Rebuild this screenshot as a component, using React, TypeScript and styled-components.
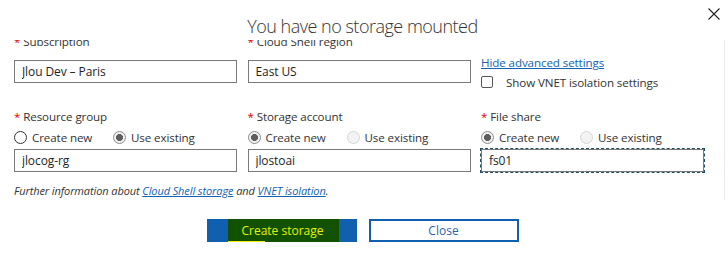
import styled, { createGlobalStyle } from 'styled-components'

/* --------------------- Style --------------------- */
const GlobalStyle = createGlobalStyle`
  html, body {
    margin: 0;
    padding: 0;
    background: #fff;
  }
  body {
    font-family: 'Open Sans', 'Liberation Sans', sans-serif;
    color: #333;
  }
`

const Dialog = styled.div`
  width: 725px;
  height: 255px;
  display: flex;
  flex-direction: column;
  overflow: hidden;
  background: #fff;
`

const Header = styled.header`
  height: 40px;
  flex: none;
  display: grid;
  grid-template-columns: 1fr auto 1fr;
  align-items: start;
`

const Title = styled.h1`
  grid-column: 2;
  margin: 0;
  padding-top: 15px;
  font-size: 18px;
  line-height: 23px;
  letter-spacing: -0.5px;
  font-weight: 300;
  color: #333;
  white-space: nowrap;
`

const CloseIcon = styled.button`
  grid-column: 3;
  justify-self: end;
  margin: 8px 5px 0 0;
  padding: 0;
  width: 12px;
  height: 12px;
  border: none;
  background: none;
  display: flex;
  > svg {
    display: block;
  }
`

const Body = styled.div`
  height: 160px;
  flex: none;
  overflow: hidden;
  border-right: 1px solid #ececec;
`

const Scroller = styled.div`
  margin-top: -6px;
  padding: 0 14px;
  font-size: 11.6px;
  letter-spacing: -0.1px;
`

const Grid = styled.div`
  display: grid;
  grid-template-columns: 223px 223px 223px;
  column-gap: 10.5px;
  row-gap: 18px;
  align-items: start;
`

const Field = styled.div<{ $padTop?: number }>`
  display: flex;
  flex-direction: column;
  padding-top: ${(p) => p.$padTop ?? 0}px;
`

const Label = styled.label<{ $gap?: number }>`
  line-height: 16px;
  color: #333;
  margin-bottom: ${(p) => p.$gap ?? 0}px;
  white-space: nowrap;
  > span {
    color: #e00000;
  }
`

const RadioRow = styled.div`
  height: 22px;
  margin: 1px 0 1px;
  display: grid;
  grid-template-columns: 99px auto;
  align-items: center;
`

const RadioOption = styled.label`
  display: flex;
  align-items: center;
  gap: 5px;
  color: #333;
  white-space: nowrap;
`

const RadioDot = styled.span<{ $state: 'off' | 'on' | 'disabled' }>`
  width: 13px;
  height: 13px;
  box-sizing: border-box;
  border-radius: 50%;
  flex: none;
  border: 1px solid
    ${(p) => (p.$state === 'off' ? '#333' : p.$state === 'on' ? '#8a8a8a' : '#d6d6d6')};
  background: ${(p) =>
    p.$state === 'on'
      ? 'radial-gradient(circle, #5e5e5e 0 3.2px, #f2f2f2 3.8px)'
      : p.$state === 'disabled'
      ? '#f3f3f3'
      : '#fff'};
`

const Input = styled.input<{ $focused?: boolean }>`
  height: 23px;
  box-sizing: border-box;
  width: 100%;
  margin: 0;
  padding: 0 7px;
  border: 1px solid #7a7a7a;
  font-family: inherit;
  font-size: 12px;
  letter-spacing: -0.1px;
  color: #1e1e1e;
  background: #fff;
  outline: ${(p) => (p.$focused ? '1px dashed #1d4d5e' : 'none')};
  outline-offset: 0;
`

const Link = styled.a`
  color: #1263b3;
  text-decoration: underline;
  cursor: pointer;
`

const SideLink = styled(Link)`
  line-height: 16px;
`

const CheckRow = styled.label`
  display: flex;
  align-items: center;
  gap: 13px;
  height: 18px;
  margin-top: 2px;
  color: #333;
`

const CheckBox = styled.span`
  width: 12px;
  height: 12px;
  box-sizing: border-box;
  border: 1px solid #555;
  border-radius: 2px;
  flex: none;
`

const Info = styled.p`
  margin: 11px 0 0;
  font-size: 11px;
  line-height: 15px;
  font-style: italic;
  color: #333;
`

const Footer = styled.footer`
  flex: 1;
  display: flex;
  justify-content: center;
  align-items: flex-start;
  gap: 12px;
  padding-top: 19px;
`

const Button = styled.button<{ $primary?: boolean }>`
  width: 150px;
  height: 23px;
  box-sizing: border-box;
  padding: 0;
  display: flex;
  justify-content: center;
  align-items: center;
  font-family: inherit;
  font-size: 12px;
  border: 2px solid #1160b0;
  background: ${(p) => (p.$primary ? '#1160b0' : '#fff')};
  color: ${(p) => (p.$primary ? '#fff' : '#2e63ad')};
`

const Highlight = styled.span`
  align-self: stretch;
  margin: -2px 0 -2px 4px;
  padding: 0 15px 0 13px;
  display: flex;
  align-items: center;
  color: #e4f400;
  background: linear-gradient(#f0f000, #f0f000) no-repeat left bottom / 37px 1px,
    #115100;
`
/* ------------------------------------------------- */

const App: React.FC = () => {
  return (
    <>
      <GlobalStyle />
      <Dialog>
        <Header>
          <Title>You have no storage mounted</Title>
          <CloseIcon aria-label="Close">
            <svg width="12" height="12" viewBox="0 0 12 12">
              <path d="M0.5 0.5 L11.5 11.5 M11.5 0.5 L0.5 11.5" stroke="#222" strokeWidth="1.1" />
            </svg>
          </CloseIcon>
        </Header>
        <Body>
          <Scroller>
            <Grid>
              <Field>
                <Label $gap={10}>
                  <span>*</span> Subscription
                </Label>
                <Input defaultValue="Jlou Dev – Paris" />
              </Field>
              <Field>
                <Label $gap={10}>
                  <span>*</span> Cloud Shell region
                </Label>
                <Input defaultValue="East US" />
              </Field>
              <Field $padTop={21}>
                <SideLink>Hide advanced settings</SideLink>
                <CheckRow>
                  <CheckBox />
                  Show VNET isolation settings
                </CheckRow>
              </Field>

              <Field>
                <Label>
                  <span>*</span> Resource group
                </Label>
                <RadioRow>
                  <RadioOption>
                    <RadioDot $state="off" />
                    Create new
                  </RadioOption>
                  <RadioOption>
                    <RadioDot $state="on" />
                    Use existing
                  </RadioOption>
                </RadioRow>
                <Input defaultValue="jlocog-rg" />
              </Field>
              <Field>
                <Label>
                  <span>*</span> Storage account
                </Label>
                <RadioRow>
                  <RadioOption>
                    <RadioDot $state="on" />
                    Create new
                  </RadioOption>
                  <RadioOption>
                    <RadioDot $state="disabled" />
                    Use existing
                  </RadioOption>
                </RadioRow>
                <Input defaultValue="jlostoai" />
              </Field>
              <Field>
                <Label>
                  <span>*</span> File share
                </Label>
                <RadioRow>
                  <RadioOption>
                    <RadioDot $state="on" />
                    Create new
                  </RadioOption>
                  <RadioOption>
                    <RadioDot $state="disabled" />
                    Use existing
                  </RadioOption>
                </RadioRow>
                <Input defaultValue="fs01" $focused />
              </Field>
            </Grid>
            <Info>
              Further information about <Link>Cloud Shell storage</Link> and{' '}
              <Link>VNET isolation</Link>.
            </Info>
          </Scroller>
        </Body>
        <Footer>
          <Button $primary>
            <Highlight>Create storage</Highlight>
          </Button>
          <Button>Close</Button>
        </Footer>
      </Dialog>
    </>
  )
}
export default App
